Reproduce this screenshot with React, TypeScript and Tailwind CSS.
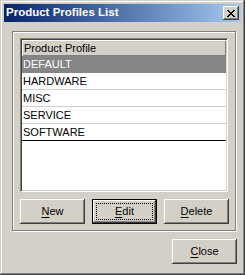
import React from 'react';

const profiles = ['DEFAULT', 'HARDWARE', 'MISC', 'SERVICE', 'SOFTWARE'];

const raised =
  'shadow-[inset_-1px_-1px_#404040,inset_1px_1px_#ffffff,inset_-2px_-2px_#808080,inset_2px_2px_#d4d0c8]';

function Button({ label, isDefault = false }: { label: string; isDefault?: boolean }) {
  const first = label.charAt(0);
  const rest = label.slice(1);

  if (isDefault) {
    return (
      <div className="h-[25px] w-[65px] border border-black bg-[#d4d0c8]">
        <div className="flex h-full w-full items-center justify-center p-[3px] shadow-[inset_-1px_-1px_#404040,inset_1px_1px_#ffffff,inset_-2px_-2px_#808080]">
          <div className="flex h-full w-full items-center justify-center border border-dotted border-black text-[11px] text-black">
            <span className="underline underline-offset-[2px]">{first}</span>
            {rest}
          </div>
        </div>
      </div>
    );
  }

  return (
    <div className={`flex h-[25px] w-[65px] items-center justify-center bg-[#d4d0c8] text-[11px] text-black ${raised}`}>
      <span className="underline underline-offset-[2px]">{first}</span>
      {rest}
    </div>
  );
}

export default function App() {
  return (
    <div className="h-[275px] w-[245px] bg-[#d4d0c8] font-['Liberation_Sans',Arial,sans-serif]">
      <div className="flex h-full w-full flex-col p-[4px] shadow-[inset_-1px_-1px_#404040,inset_1px_1px_#d4d0c8,inset_-2px_-2px_#808080,inset_2px_2px_#ffffff]">
        {/* title bar */}
        <div className="flex h-[18px] items-center justify-between bg-gradient-to-r from-[#0a246a] to-[#a6caf0] pl-[2px] pr-[2px]">
          <span className="text-[11.5px] font-bold leading-none text-white">Product Profiles List</span>
          <div className={`flex h-[14px] w-[16px] items-center justify-center bg-[#d4d0c8] ${raised}`}>
            <svg width="8" height="7" viewBox="0 0 8 7" shapeRendering="crispEdges">
              <path d="M0 0h2v1H0zM6 0h2v1H6zM1 1h2v1H1zM5 1h2v1H5zM2 2h4v1H2zM3 3h2v1H3zM2 4h4v1H2zM1 5h2v1H1zM5 5h2v1H5zM0 6h2v1H0zM6 6h2v1H6z" fill="#000" />
            </svg>
          </div>
        </div>

        {/* client */}
        <div className="flex flex-1 flex-col pl-[8px] pt-[9px]">
          <div className="flex h-[200px] w-[224px] flex-col border border-[#808080] pl-[7px] pt-[6px] shadow-[inset_1px_1px_#ffffff,1px_1px_#ffffff]">
            <div className="h-[154px] w-[208px] border border-b-white border-l-[#808080] border-r-white border-t-[#808080] bg-white shadow-[inset_1px_1px_#404040,inset_-1px_-1px_#d4d0c8]">
              <div className="flex h-full flex-col p-[1px]">
                <div className="flex h-[16px] items-center bg-[#d4d0c8] pl-[2px] text-[11px] text-black shadow-[inset_1px_1px_#ffffff,inset_-1px_-1px_#808080]">
                  Product Profile
                </div>
                {profiles.map((name, i) => (
                  <div
                    key={name}
                    className={`flex h-[17px] items-center pl-[1px] text-[11px] ${
                      i === 0
                        ? 'bg-[#858585] text-white'
                        : i === profiles.length - 1
                          ? 'border-b border-black text-black'
                          : 'border-b border-[#d4d0c8] text-black'
                    }`}
                  >
                    {name}
                  </div>
                ))}
              </div>
            </div>

            <div className="mt-[7px] flex gap-[7px]">
              <Button label="New" />
              <Button label="Edit" isDefault />
              <Button label="Delete" />
            </div>
          </div>

          <div className="mt-[8px] flex pl-[160px]">
            <Button label="Close" />
          </div>
        </div>
      </div>
    </div>
  );
}
